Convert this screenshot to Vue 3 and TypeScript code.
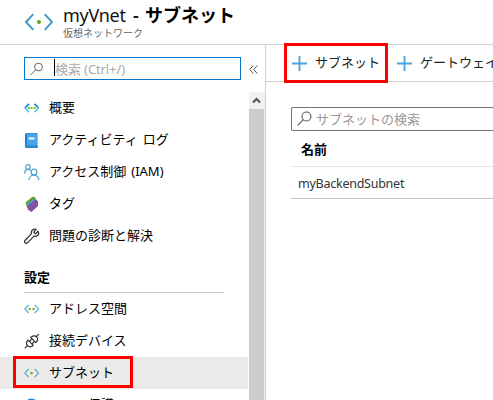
<script setup lang="ts">
import { ref } from 'vue'

interface MenuItem {
  id: string
  label: string
  selected?: boolean
}

const general: MenuItem[] = [
  { id: 'overview', label: '概要' },
  { id: 'log', label: 'アクティビティ ログ' },
  { id: 'iam', label: 'アクセス制御 (IAM)' },
  { id: 'tags', label: 'タグ' },
  { id: 'diagnose', label: '問題の診断と解決' },
]
const settings: MenuItem[] = [
  { id: 'address', label: 'アドレス空間' },
  { id: 'devices', label: '接続デバイス' },
  { id: 'subnets', label: 'サブネット', selected: true },
  { id: 'ddos', label: 'DDoS 保護' },
]
const groups = [
  { title: '', items: general },
  { title: '設定', items: settings },
]
const commands = ['サブネット', 'ゲートウェイ サブネット']
const subnets = ref(['myBackendSubnet'])
</script>

<template>
  <div class="page">
    <header class="header">
      <svg class="logo" width="30" height="18" viewBox="0 0 30 18" fill="none">
        <path d="M9.300 1.200 2 9l7.300 7.800M20.700 1.200 28 9l-7.300 7.800" stroke="#3999c6" stroke-width="1.900" />
        <circle cx="15" cy="9" r="2" fill="#59a80f" />
      </svg>
      <div class="titles">
        <h1><span class="vnet">myVnet</span><span class="dash">-</span><b>サブネット</b></h1>
        <p>仮想ネットワーク</p>
      </div>
    </header>

    <div class="body">
      <aside class="side">
        <div class="find">
          <div class="find-box">
            <svg width="14" height="14" viewBox="0 0 14 14" fill="none" stroke="#666">
              <circle cx="8.500" cy="5" r="3.900" /><path d="M5.700 7.800.5 13" />
            </svg>
            <span class="caret"></span><span class="hint">検索 (Ctrl+/)</span>
          </div>
          <svg class="collapse" width="9" height="9" viewBox="0 0 9 9" fill="none" stroke="#555">
            <path d="M4.300.5.700 4.500l3.600 4M8.300.5 4.700 4.500l3.600 4" />
          </svg>
        </div>
        <div class="menu-area">
          <nav class="menu">
            <section v-for="group in groups" :key="group.title">
              <h2 v-if="group.title">{{ group.title }}</h2>
              <a v-for="item in group.items" :key="item.id" class="item" :class="{ selected: item.selected }">
                <svg class="icon" width="16" height="16" viewBox="0 0 16 16" fill="none">
                  <template v-if="item.id === 'overview'">
                    <path d="M5 3.800.900 8M10.500 3.800 14.600 8" stroke="#1683d8" stroke-width="1.700" />
                    <path d="M.900 8 5 12.200M14.600 8l-4.100 4.200" stroke="#42d5ed" stroke-width="1.700" />
                    <path d="M4.500 8h7" stroke="#b5dc83" />
                    <g fill="#77b71c"><circle cx="4.700" cy="8" r="1" /><circle cx="7.700" cy="8" r="1" /><circle cx="10.700" cy="8" r="1" /></g>
                  </template>
                  <template v-else-if="item.id === 'log'">
                    <rect x="1" y="1" width="13" height="15" rx="1.500" fill="#1f80ce" />
                    <path d="M3 1.500h10v12H3z" fill="#48a5e8" />
                    <path d="M2 13.500h11.500V15H2z" fill="#2b91dc" />
                    <path d="M13 2h1v12h-1z" fill="#8bcaf1" />
                    <path d="M4.500 5.500h6v2h-6z" fill="#f2fbff" />
                  </template>
                  <template v-else-if="item.id === 'iam'">
                    <g stroke="#4aa2cc" stroke-width="1.200">
                      <circle cx="3.800" cy="3" r="2.300" /><path d="M.6 9.500C.6 5 4.500 4.500 6.500 6.500" />
                      <circle cx="10" cy="8" r="2.900" /><path d="M5 16c0-6.500 9.800-6.500 9.800 0" />
                    </g>
                  </template>
                  <template v-else-if="item.id === 'tags'">
                    <path d="M1.500 6.500 7.500 1.500q3-1.500 4 .5V8L3 12z" fill="#5ea71c" />
                    <path d="M2.500 8 8 4l4-1.500 1 6L5 14z" fill="#3ba7cf" />
                    <path d="m3.500 9.500 5.500-4.200q3.500-3 5 .2V10L7.500 16 3.700 13.500z" fill="#8351a5" />
                  </template>
                  <path
                    v-else-if="item.id === 'diagnose'"
                    d="M14 3.200 11.700 5.800 9.800 4.200 12 1.400C9.300.3 6.700 2.600 7.500 5.600L1 12.500c-1.300 1.700.9 3.700 2.500 2.300L10 8.200c3.400.8 5.700-2.200 4-5Z"
                    stroke="#303030" stroke-width="1.200"
                  />
                  <g v-else-if="item.id === 'devices'" stroke="#303030" stroke-width="1.150" stroke-linejoin="round">
                    <path d="M.7 15.300 3.500 12.500M12 4 14.800 1.200" />
                    <path d="M4 7.200 9.200 12.300 8 13.300c-2 1-3.500.5-4.500-.8-1.500-1.500-1.500-3.500.5-5.300Z" />
                    <path d="M6.700 4.500 11.800 9.600C14 7.800 14 5.500 12.500 3.900 11 2.300 8.700 2.500 6.700 4.500ZM5.300 8.500l2.200-2.200M7.800 11l2.300-2.200" />
                  </g>
                  <ellipse v-else-if="item.id === 'ddos'" cx="7.500" cy="8" rx="7" ry="6.500" fill="#2384d5" />
                  <template v-else>
                    <path d="M4.700 4 .8 8l3.900 4M10.700 4l3.900 4-3.900 4" stroke="#59acd0" stroke-width="1.100" />
                    <circle v-if="item.id === 'subnets'" cx="7.500" cy="8" r="1.300" fill="#6bb120" />
                    <g v-else fill="#6bb120"><circle cx="5.700" cy="8" r="1.200" /><circle cx="9.600" cy="8" r="1.200" /></g>
                  </template>
                </svg>
                <span class="label">{{ item.label }}</span>
                <i v-if="item.selected" class="mark mark-menu"></i>
              </a>
            </section>
          </nav>
          <div class="scrollbar">
            <div class="up">
              <svg width="9" height="7" viewBox="0 0 9 7" fill="none" stroke="#505050" stroke-width="2"><path d="m1 5.500 3.500-3.500L8 5.500" /></svg>
            </div>
            <div class="thumb"></div>
          </div>
        </div>
      </aside>

      <main class="main">
        <div class="toolbar">
          <button v-for="(command, index) in commands" :key="command">
            <svg width="15" height="15" viewBox="0 0 15 15" stroke="#4ba0de" stroke-width="1.800"><path d="M7.500 0v15M0 7.500h15" /></svg>
            <span class="command">{{ command }}</span>
            <i v-if="index === 0" class="mark mark-add"></i>
          </button>
        </div>
        <div class="content">
          <div class="filter">
            <svg width="16" height="16" viewBox="0 0 16 16" fill="none" stroke="#555" stroke-width="1.100">
              <circle cx="9.500" cy="5.500" r="4.500" /><path d="M6.300 8.700.7 14.300" />
            </svg>
            <span>サブネットの検索</span>
          </div>
          <div class="thead">名前</div>
          <div v-for="name in subnets" :key="name" class="row">{{ name }}</div>
        </div>
      </main>
    </div>
  </div>
</template>

<style>
body { margin: 0; overflow: hidden; }
</style>

<style scoped>
* { box-sizing: border-box; }
.page {
  width: 493px; height: 400px; overflow: hidden; display: flex; flex-direction: column;
  background: #fff; color: #111; font: 13px/20px "Noto Sans", "Noto Sans CJK JP", sans-serif; white-space: nowrap;
}
.header { height: 45px; flex: none; display: flex; border-bottom: 1px solid #d2d2d2; padding-left: 24px; }
.logo { margin-top: 13px; flex: none; }
.titles { margin-left: 9px; padding-top: 3px; }
h1 { margin: 0; height: 24px; font-size: 18px; line-height: 24px; font-weight: 400; display: flex; }
.vnet { width: 70px; letter-spacing: -0.3px; }
.dash { width: 12px; font-weight: 600; }
h1 b { font-family: "Noto Sans CJK JP", sans-serif; color: #000; line-height: 22px; }
p { margin: 0; font-size: 10px; line-height: 13px; color: #666; }
.body { flex: 1; min-height: 0; display: flex; }
.side { width: 266px; flex: none; border-right: 1px solid #d2d2d2; display: flex; flex-direction: column; }
.find { height: 47px; padding: 12px 0 0 24px; display: flex; flex: none; }
.find-box { width: 217px; height: 23px; border: 1px solid #0078d4; display: flex; align-items: center; padding-left: 5px; }
.caret { width: 1px; height: 17px; background: #000; margin: -2px 0 0 10px; }
.hint { color: #aaa; letter-spacing: -0.1px; }
.collapse { margin: 8px 0 0 8px; }
.menu-area { flex: 1; min-height: 0; display: flex; }
.menu { flex: 1; min-width: 0; overflow: hidden; margin-right: 1px; }
.item { height: 32px; padding-left: 24px; display: flex; align-items: center; position: relative; color: #000; }
.icon { margin-right: 9px; flex: none; }
.label { padding-bottom: 2px; word-spacing: 1.500px; }
.selected { background: #edebe9; }
h2 { margin: 13px 0 0 24px; width: 200px; height: 28px; font-size: 13px; line-height: 24px; border-bottom: 1px solid #c8c8c8; color: #000; }
.mark { position: absolute; border: 3px solid #f00; pointer-events: none; }
.mark-menu { left: 13px; top: -1px; width: 120px; height: 32px; }
.scrollbar { width: 16px; flex: none; background: #f1f1f1; display: flex; flex-direction: column; }
.up { height: 17px; display: grid; place-items: center; flex: none; padding-right: 1px; }
.thumb { width: 15px; flex: 1; background: #cdcdcd; }
.main { flex: 1; min-width: 0; }
.toolbar { height: 37px; border-bottom: 1px solid #d2d2d2; display: flex; padding-left: 26px; gap: 17px; }
button { border: 0; padding: 0; background: none; font: inherit; color: #222; display: flex; align-items: center; gap: 8px; position: relative; flex: none; }
.command { padding-bottom: 2px; }
.mark-add { left: -8px; top: -2px; width: 104px; height: 40px; }
.content { padding: 25px 0 0 25px; }
.filter { height: 24px; border: 1px solid #767676; border-right: 0; border-radius: 2px 0 0 2px; display: flex; align-items: center; padding-left: 5px; gap: 3px; color: #999; }
.thead { height: 36px; border-bottom: 1px solid #e5e5e5; padding: 8px 0 0 10px; font-weight: 700; color: #000; }
.row { height: 32px; border-bottom: 1px solid #c8c8c8; padding: 7px 0 0 7px; color: #333; font-size: 12.500px; letter-spacing: -0.250px; }
</style>
